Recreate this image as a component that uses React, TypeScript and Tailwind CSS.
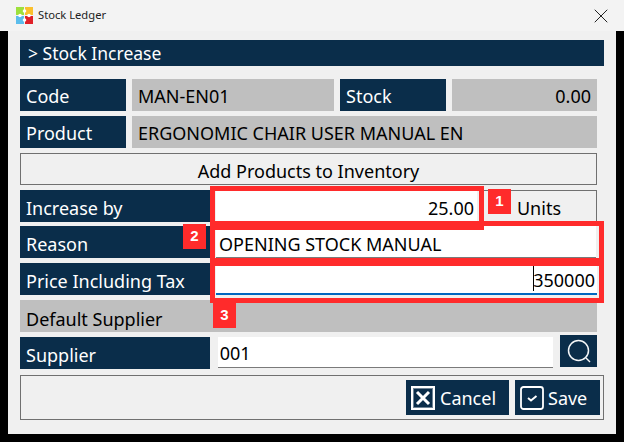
import { X } from 'lucide-react';

const font = "font-['Noto_Sans','Open_Sans',sans-serif]";

function Label({ text, className = 'pt-[3px]' }: { text: string; className?: string }) {
  return (
    <div className={`flex h-8 items-center bg-[#0a2d4a] pl-[6px] text-[18px] text-white ${className}`}>
      {text}
    </div>
  );
}

function Grey({ text, className = 'pt-[3px]' }: { text: string; className?: string }) {
  return (
    <div className={`flex h-8 items-center bg-[#bfbfbf] px-[6px] text-[18px] text-black ${className}`}>
      {text}
    </div>
  );
}

function Logo() {
  return (
    <svg width="17" height="17" viewBox="0 0 17 17">
      <rect x="0" y="0" width="8" height="8" fill="#9ee03c" />
      <rect x="9" y="0" width="8" height="8" fill="#fbc02d" />
      <rect x="0" y="9" width="8" height="8" fill="#5bbdec" />
      <rect x="9" y="9" width="8" height="8" fill="#e02028" />
      <circle cx="8.5" cy="4" r="1.8" fill="#fff" />
      <circle cx="8.5" cy="13" r="1.8" fill="#fff" />
      <circle cx="4" cy="8.5" r="1.8" fill="#fff" />
      <circle cx="13" cy="8.5" r="1.8" fill="#fff" />
    </svg>
  );
}

function Badge({ n, className }: { n: number; className: string }) {
  return (
    <div className={`absolute flex h-[25px] w-[23px] items-center justify-center bg-[#ff2b2b] font-['Liberation_Sans',sans-serif] text-[15px] font-bold text-white ${className}`}>
      {n}
    </div>
  );
}

export default function App() {
  return (
    <div className={`relative h-[442px] w-[624px] overflow-hidden bg-black ${font}`}>
      {/* title bar */}
      <div className="flex h-[31px] items-center bg-[#f3f3f3] pl-4 pr-[11px]">
        <Logo />
        <span className="ml-[5px] text-[11.2px] text-[#222]">Stock Ledger</span>
        <X className="ml-auto h-6 w-6 text-[#222]" strokeWidth={1} />
      </div>

      <div className="mx-2 h-[403px] bg-[#f0f0f0] pl-3 pr-3 pt-[9px]">
        <div className="flex h-[26px] w-[584px] items-center bg-[#0a2d4a] pl-2 text-[17.5px] text-white">
          &gt; Stock Increase
        </div>

        <div className="mt-[13px] flex w-[577px] flex-col gap-[5px]">
          <div className="flex gap-[6px]">
            <Label text="Code" className="w-[106px] pt-[3px]" />
            <Grey text="MAN-EN01" className="w-[202px] pt-[3px]" />
            <Label text="Stock" className="w-[106px] pt-[3px]" />
            <Grey text="0.00" className="flex-1 justify-end pt-[3px]" />
          </div>
          <div className="flex gap-[6px]">
            <Label text="Product" className="w-[106px] pt-[3px]" />
            <Grey text="ERGONOMIC CHAIR USER MANUAL EN" className="flex-1 pt-[3px]" />
          </div>
          <div className="flex h-8 items-center justify-center border border-[#707070] pt-[4px] text-[18px] text-black">
            Add Products to Inventory
          </div>
          <div className="flex gap-[6px]">
            <Label text="Increase by" className="w-[190px] pt-[5px]" />
            <div className="mt-[1px] flex h-[31px] w-[261px] items-center justify-end bg-white px-[3px] pt-[4px] text-[18px] text-black">
              25.00
            </div>
            <div className="flex h-8 flex-1 items-center justify-end border border-[#707070] pr-[35px] pt-[5px] text-[18px] text-black">
              Units
            </div>
          </div>
          <div className="-mt-[1px] flex gap-[6px]">
            <Label text="Reason" className="w-[190px] pt-[5px]" />
            <div className="flex h-[32px] w-[380px] items-center border-b border-[#7a7a7a] bg-white px-[3px] pt-[5px] text-[18px] text-black">
              OPENING STOCK MANUAL
            </div>
          </div>
          <div className="flex gap-[6px]">
            <Label text="Price Including Tax" className="w-[190px] pt-[5px]" />
            <div className="flex h-8 flex-1 items-center justify-end border-b-2 border-[#0067c0] bg-white px-[2px] pt-[5px] text-[18px] text-black">
              <span className="-mr-[1px] -mt-[5px] h-[26px] w-px bg-black" />
              <span>350000</span>
            </div>
          </div>
          <Grey text="Default Supplier" className="pt-[7px]" />
          <div className="flex gap-[7px]">
            <Label text="Supplier" className="w-[190px] pt-[5px]" />
            <div className="ml-[1px] flex h-[31px] w-[336px] items-center border-b border-[#7a7a7a] bg-white px-[2px] pt-[3px] text-[18px] text-black">
              001
            </div>
            <div className="-mt-[2px] flex h-8 w-[37px] items-center justify-center bg-[#0a2d4a]">
              <svg width="26" height="26" viewBox="0 0 26 26" fill="none" stroke="#f4f6f8" strokeWidth="1.5">
                <circle cx="12.5" cy="12.5" r="10" />
                <path d="M20 20 L24 24" />
              </svg>
            </div>
          </div>
        </div>

        <div className="mt-[6px] flex h-[45px] w-[584px] items-center justify-end gap-[6px] border border-[#707070] pr-[3px]">
          <div className="flex h-[35px] w-[103px] items-center gap-[5px] bg-[#0a2d4a] pl-[5px] pt-[1px] text-[18px] text-white">
            <svg className="shrink-0" width="24" height="24" viewBox="0 0 24 24" fill="none">
              <rect x="1" y="1" width="22" height="22" stroke="#fff" strokeWidth="2" />
              <rect x="2.5" y="2.5" width="19" height="19" stroke="#6f8496" strokeWidth="1" />
              <path d="M6 6 L18 18 M18 6 L6 18" stroke="#fff" strokeWidth="3" />
            </svg>
            Cancel
          </div>
          <div className="flex h-[35px] w-[85px] items-center gap-[4px] bg-[#0a2d4a] pl-[5px] pt-[1px] text-[18px] text-white">
            <svg className="shrink-0" width="24" height="24" viewBox="0 0 24 24" fill="none" stroke="#fff">
              <rect x="1" y="1" width="22" height="22" rx="2.5" strokeWidth="1.8" />
              <path d="M8 12 L11 14.5 L16.5 10" strokeWidth="2" />
            </svg>
            Save
          </div>
        </div>
      </div>

      {/* annotations */}
      <div className="absolute left-[210px] top-[186px] h-[44px] w-[274px] border-[5px] border-[#ff2b2b]" />
      <div className="absolute left-[210px] top-[221px] h-[45px] w-[394px] border-[5px] border-[#ff2b2b]" />
      <div className="absolute left-[210px] top-[258px] h-[45px] w-[394px] border-[5px] border-[#ff2b2b]" />
      <Badge n={1} className="left-[488px] top-[189px]" />
      <Badge n={2} className="left-[183px] top-[224px]" />
      <Badge n={3} className="left-[213px] top-[303px]" />
    </div>
  );
}
